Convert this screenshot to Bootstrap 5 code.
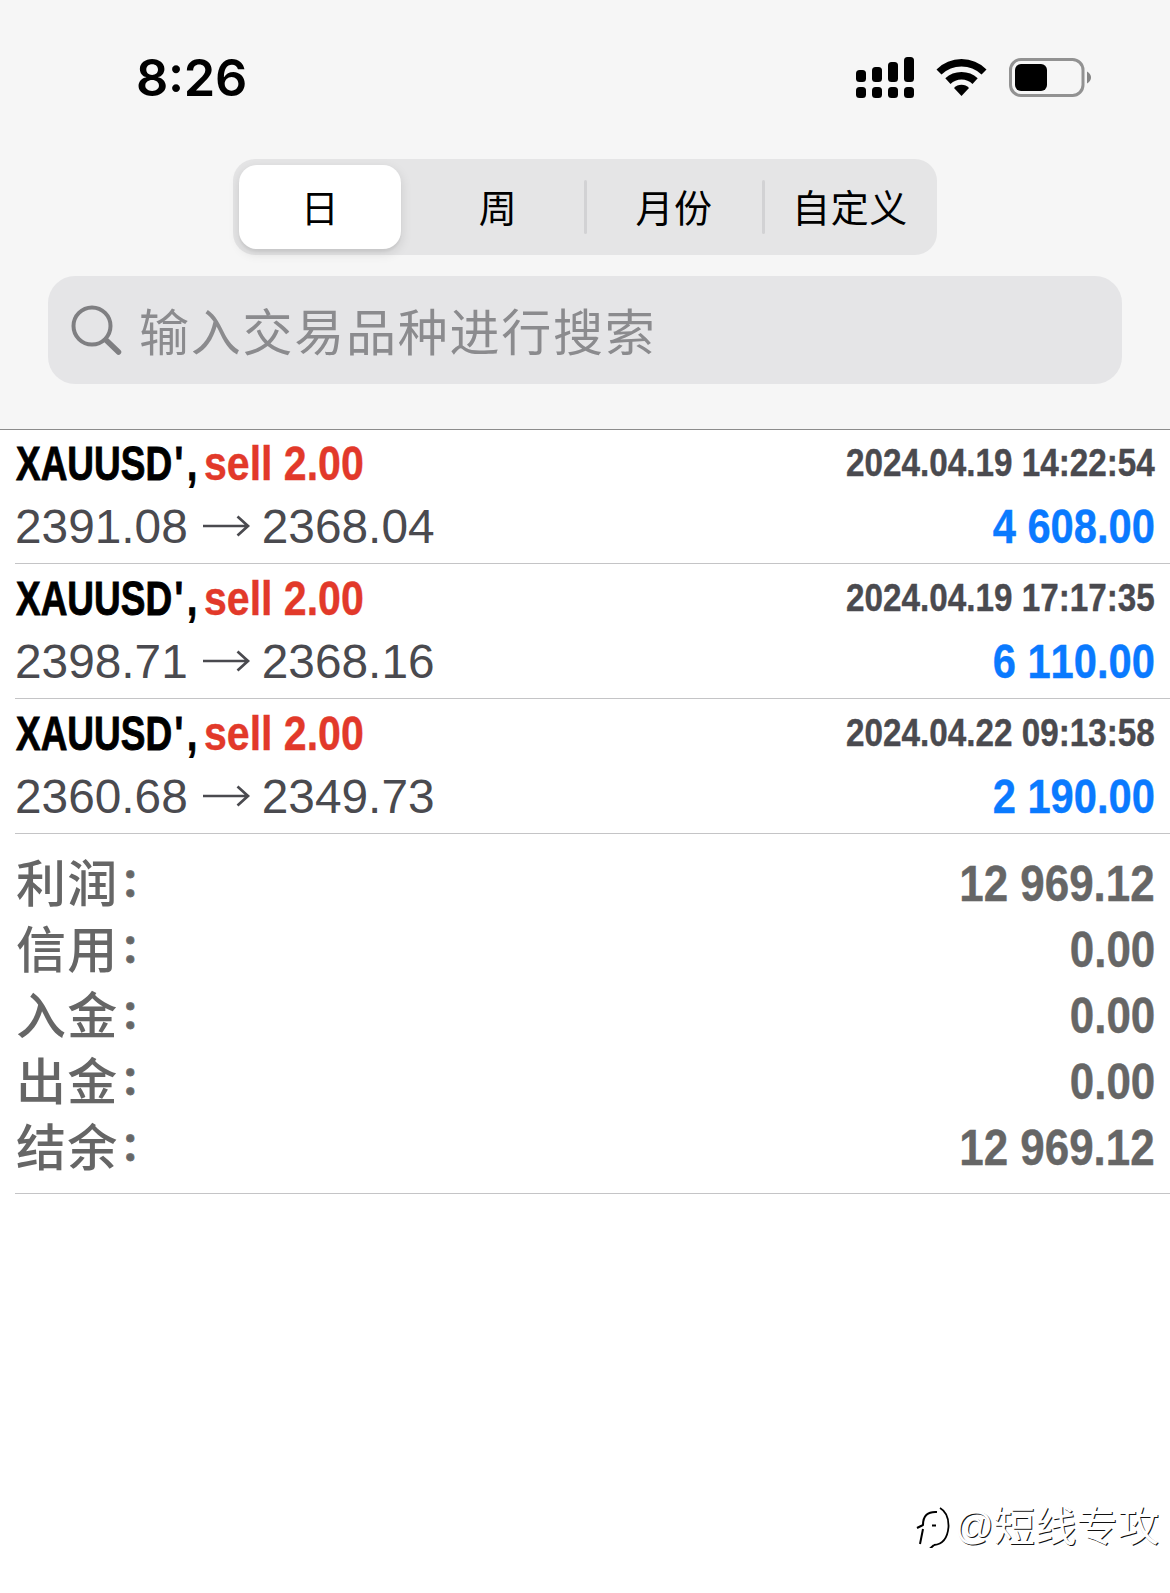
<!DOCTYPE html>
<html lang="zh-CN">
<head>
<meta charset="utf-8">
<meta name="viewport" content="width=device-width, initial-scale=1">
<title>XAUUSD</title>
<link href="https://cdn.jsdelivr.net/npm/bootstrap@5.3.0/dist/css/bootstrap.min.css" rel="stylesheet">
<style>
body{width:1170px;height:1593px;overflow:hidden;background:#fff;font-family:"Liberation Sans","Noto Sans CJK SC",sans-serif}
.topbar{height:430px;background:#f6f6f6;border-bottom:1px solid #8c8c8c}
.statusbar{height:159px;padding:50px 78px 0 136px}
.clock{font:600 50.5px/56px Inter,sans-serif;letter-spacing:-.3px;color:#000}
.clock i{font-style:normal;position:relative;top:-4px}
.segments{width:704px;height:96px;margin-left:233px;border-radius:22px;background:#e5e5e6}
.seg{width:176px;font:400 38px/56px "Noto Sans CJK SC",sans-serif;letter-spacing:.6px;color:#000;position:relative;padding:0 0 3px 2px}
.seg.split::after{content:"";position:absolute;right:-2px;top:21px;width:3px;height:54px;background:#d2d2d4;border-radius:2px}
.seg.wide::after{right:-4px}
.seg.on{padding:0}
.seg.on span{width:162px;height:84px;line-height:81px;border-radius:18px;background:#fff;box-shadow:0 4px 12px rgba(0,0,0,.12),0 3px 2px rgba(0,0,0,.04);margin-left:-2px}
.searchbox{margin:21px 48px 0 48px;height:108px;border-radius:27px;background:#e5e5e7;color:#8b8b8e;padding-left:23px;font:400 50px/104px "Noto Sans CJK SC",sans-serif;letter-spacing:1.75px}
.hint{margin-left:17px;padding-bottom:3px}
.deal{height:135px;margin-left:15px;padding:2px 15px 0 0;border-bottom:1px solid #c4c4c6}
.deal.first{height:134px;padding-top:1px}
.line1{height:68px}
.sq{display:inline-block;white-space:pre;font-weight:700;font-kerning:none;transform-origin:0 50%}
.sqr{transform-origin:100% 50%}
.sym{font-size:48px;line-height:66px;color:#000;transform:scaleX(.77);-webkit-text-stroke:.9px #000}
.sym i{font-style:normal;letter-spacing:5px;margin-left:3px}
.symcell{width:189px;padding-left:1px}
.side{font-size:48px;line-height:66px;color:#e2392a;transform:scaleX(.855);-webkit-text-stroke:.4px #e2392a}
.date{font-size:39.5px;line-height:62px;color:#4a4a4f;transform:scaleX(.842);-webkit-text-stroke:.4px #4a4a4f}
.price{font-size:47.8px;line-height:56px;color:#4a4a4f}
.gain{font-size:48px;line-height:56px;color:#0a7aff;transform:scaleX(.868);-webkit-text-stroke:.4px #0a7aff}
.totals{height:360px;margin-left:15px;padding:17px 15px 0 0;border-bottom:1px solid #c4c4c6;color:#666}
.total{height:66px}
.tag{font:500 50px/58px "Noto Sans CJK SC",sans-serif;letter-spacing:1.3px;padding-left:1px}
.tag i{font:700 39px/50px "Noto Sans CJK SC",sans-serif;position:relative;top:-6px;left:2px;-webkit-text-stroke:.8px #666}
.amount{font-size:50.5px;line-height:66px;transform:scaleX(.87);-webkit-text-stroke:.4px #666}
.stamp{position:absolute;left:910px;top:1493px;color:#fff;font:400 41.4px/60px "Noto Sans CJK SC",sans-serif;text-shadow:1px 1px 0 #111;white-space:nowrap}
.stamp .at{font:400 38px/50px "Liberation Sans",sans-serif;position:relative;top:-2px}
</style>
</head>
<body>
<header class="topbar">
  <div class="statusbar d-flex justify-content-between align-items-start">
    <div class="clock">8<i>:</i>26</div>
    <svg width="240" height="56" viewBox="852 50 240 56">
      <g fill="#000">
        <rect x="856" y="70" width="10" height="12" rx="3.5"/><rect x="872" y="67" width="10" height="15" rx="3.5"/><rect x="888" y="62" width="10" height="20" rx="3.5"/><rect x="904" y="57" width="10" height="25" rx="3.5"/>
        <rect x="856" y="87" width="10" height="11" rx="3.5"/><rect x="872" y="87" width="10" height="11" rx="3.5"/><rect x="888" y="87" width="10" height="11" rx="3.5"/><rect x="904" y="87" width="10" height="11" rx="3.5"/>
        <path d="M936.5 69.5Q947 59 961.500 59T986.500 69.500L981.500 74.500Q973 66.500 961.500 66.500T941.500 74.500Z"/>
        <path d="M945.300 78.300Q952 72 961.500 72T977.700 78.300L972.500 84Q968 79.500 961.500 79.500T950.500 84Z"/>
        <path d="M954 88Q957 84.800 961.500 84.800T969 88L961.500 96Z"/>
      </g>
      <rect x="1010.500" y="59.500" width="72.500" height="36" rx="10.500" fill="none" stroke="#929292" stroke-width="3"/>
      <rect x="1015" y="64" width="32" height="27" rx="6" fill="#000"/>
      <path d="M1087 71.500Q1091 74 1091 77.500T1087 83.500Z" fill="#858585"/>
    </svg>
  </div>
  <nav class="segments d-flex align-items-center">
    <div class="seg on d-flex justify-content-center"><span class="text-center">日</span></div>
    <div class="seg split h-100 d-flex align-items-center justify-content-center">周</div>
    <div class="seg split wide h-100 d-flex align-items-center justify-content-center">月份</div>
    <div class="seg h-100 d-flex align-items-center justify-content-center">自定义</div>
  </nav>
  <div class="searchbox d-flex align-items-center">
    <svg width="51" height="52" viewBox="71 304 51 52" fill="none" stroke="#7f7f82"><circle cx="92" cy="326" r="18.500" stroke-width="4"/><path d="M106 340L118.500 352" stroke-width="5.500" stroke-linecap="round"/></svg>
    <span class="hint">输入交易品种进行搜索</span>
  </div>
</header>
<main>
  <section class="deal first">
    <div class="line1 d-flex justify-content-between"><div class="d-flex"><div class="symcell"><span class="sq sym">XAUUSD<i>',</i></span></div><span class="sq side">sell 2.00</span></div><span class="sq sqr date">2024.04.19 14:22:54</span></div>
    <div class="d-flex justify-content-between"><div class="price d-flex align-items-center"><span>2391.08</span><svg class="arrow" width="74" height="30" viewBox="0 0 74 30" fill="none" stroke="#4a4a4f" stroke-width="2.700"><path d="M15 14H60M49.500 4.500L60 14L49.500 23.500"/></svg><span>2368.04</span></div><span class="sq sqr gain">4 608.00</span></div>
  </section>
  <section class="deal">
    <div class="line1 d-flex justify-content-between"><div class="d-flex"><div class="symcell"><span class="sq sym">XAUUSD<i>',</i></span></div><span class="sq side">sell 2.00</span></div><span class="sq sqr date">2024.04.19 17:17:35</span></div>
    <div class="d-flex justify-content-between"><div class="price d-flex align-items-center"><span>2398.71</span><svg class="arrow" width="74" height="30" viewBox="0 0 74 30" fill="none" stroke="#4a4a4f" stroke-width="2.700"><path d="M15 14H60M49.500 4.500L60 14L49.500 23.500"/></svg><span>2368.16</span></div><span class="sq sqr gain">6 110.00</span></div>
  </section>
  <section class="deal">
    <div class="line1 d-flex justify-content-between"><div class="d-flex"><div class="symcell"><span class="sq sym">XAUUSD<i>',</i></span></div><span class="sq side">sell 2.00</span></div><span class="sq sqr date">2024.04.22 09:13:58</span></div>
    <div class="d-flex justify-content-between"><div class="price d-flex align-items-center"><span>2360.68</span><svg class="arrow" width="74" height="30" viewBox="0 0 74 30" fill="none" stroke="#4a4a4f" stroke-width="2.700"><path d="M15 14H60M49.500 4.500L60 14L49.500 23.500"/></svg><span>2349.73</span></div><span class="sq sqr gain">2 190.00</span></div>
  </section>
  <section class="totals">
    <div class="total d-flex justify-content-between"><span class="tag">利润<i>：</i></span><span class="sq sqr amount">12 969.12</span></div>
    <div class="total d-flex justify-content-between"><span class="tag">信用<i>：</i></span><span class="sq sqr amount">0.00</span></div>
    <div class="total d-flex justify-content-between"><span class="tag">入金<i>：</i></span><span class="sq sqr amount">0.00</span></div>
    <div class="total d-flex justify-content-between"><span class="tag">出金<i>：</i></span><span class="sq sqr amount">0.00</span></div>
    <div class="total d-flex justify-content-between"><span class="tag">结余<i>：</i></span><span class="sq sqr amount">12 969.12</span></div>
  </section>
</main>
<div class="stamp d-flex align-items-center">
  <svg width="45" height="50" viewBox="910 1501 45 50" fill="none" stroke-linejoin="round">
    <path d="M937 1515Q923 1514 923 1528L917 1531M923 1532L920 1547M934 1548L929 1552.500M932 1528.500H936" stroke="#000" stroke-width="2"/>
    <path d="M940 1511Q949 1516 948.500 1530Q947 1547 934 1548" stroke="#000" stroke-width="1.800"/>
  </svg>
  <span><span class="at">@</span>短线专攻</span>
</div>
<script src="https://cdn.jsdelivr.net/npm/bootstrap@5.3.0/dist/js/bootstrap.bundle.min.js"></script>
</body>
</html>
